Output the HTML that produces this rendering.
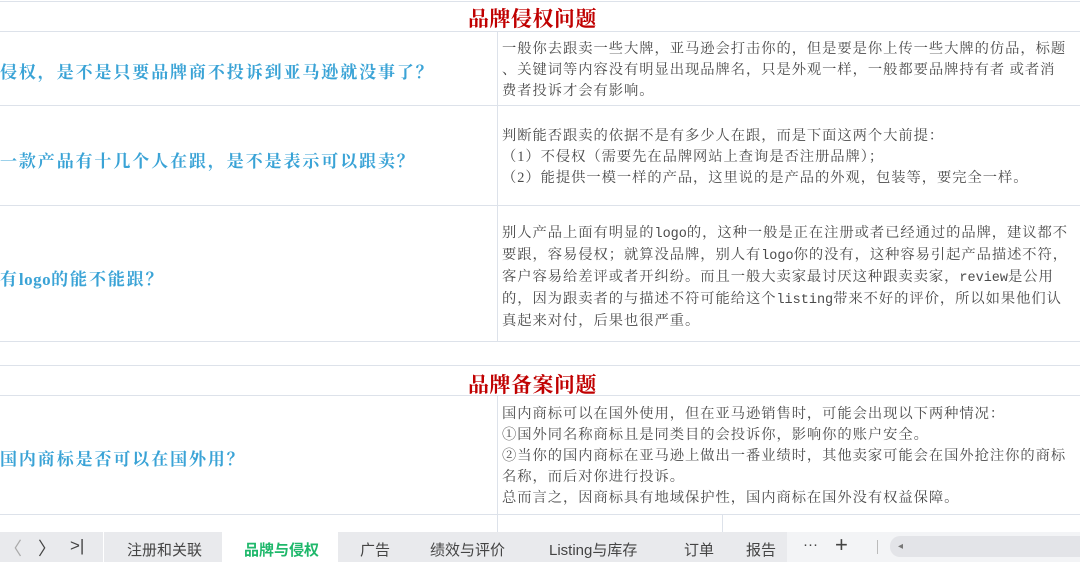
<!DOCTYPE html>
<html><head><meta charset="utf-8"><style>
*{margin:0;padding:0;box-sizing:border-box}
body{width:1080px;height:562px;overflow:hidden;background:#fff;position:relative;font-family:"Liberation Serif","Noto Serif CJK SC",serif}
.h{position:absolute;left:0;width:1080px;height:1px;background:#dde2ea}
.v{position:absolute;left:497px;width:1px;background:#dde2ea}
.t{position:absolute;color:#c00000;font-size:21px;font-weight:bold;left:468px;white-space:nowrap;letter-spacing:0.5px}
.q{position:absolute;left:0;color:#3aa3d6;font-size:17px;font-weight:bold;white-space:nowrap;letter-spacing:1.9px}
.a{position:absolute;left:502px;color:#4a4a4a;font-size:14.3px;line-height:21px;white-space:nowrap;letter-spacing:0.95px}
.a span{font-family:"Liberation Mono",monospace;font-size:13.5px;letter-spacing:0}
.bar{position:absolute;left:0;top:532px;width:1080px;height:30px;background:#e9eaed;font-family:"Liberation Sans","Noto Sans CJK SC",sans-serif;font-size:15px;color:#444}
.tab{position:absolute;top:7px;white-space:nowrap}
</style></head><body>
<div class="h" style="top:1px"></div>
<div class="h" style="top:31px"></div>
<div class="h" style="top:105px"></div>
<div class="h" style="top:205px"></div>
<div class="h" style="top:341px"></div>
<div class="h" style="top:365px"></div>
<div class="h" style="top:395px"></div>
<div class="h" style="top:514px"></div>
<div class="v" style="top:31px;height:310px"></div>
<div class="v" style="top:395px;height:137px"></div>
<div class="v" style="top:514px;height:18px;left:722px"></div>

<div class="t" style="top:3px">品牌侵权问题</div>
<div class="q" style="top:58px">侵权，是不是只要品牌商不投诉到亚马逊就没事了？</div>
<div class="a" style="top:39px">一般你去跟卖一些大牌，亚马逊会打击你的，但是要是你上传一些大牌的仿品，标题<br>、关键词等内容没有明显出现品牌名，只是外观一样，一般都要品牌持有者 或者消<br>费者投诉才会有影响。</div>

<div class="q" style="top:147px">一款产品有十几个人在跟，是不是表示可以跟卖？</div>
<div class="a" style="top:126px">判断能否跟卖的依据不是有多少人在跟，而是下面这两个大前提：<br>（1）不侵权（需要先在品牌网站上查询是否注册品牌）；<br>（2）能提供一模一样的产品，这里说的是产品的外观，包装等，要完全一样。</div>

<div class="q" style="top:265px">有<span style="font-family:'Liberation Serif';letter-spacing:0.5px">logo</span>的能不能跟？</div>
<div class="a" style="top:223px">别人产品上面有明显的<span>logo</span>的，这种一般是正在注册或者已经通过的品牌，建议都不<br>要跟，容易侵权；就算没品牌，别人有<span>logo</span>你的没有，这种容易引起产品描述不符，<br>客户容易给差评或者开纠纷。而且一般大卖家最讨厌这种跟卖卖家，<span>review</span>是公用<br>的，因为跟卖者的与描述不符可能给这个<span>listing</span>带来不好的评价，所以如果他们认<br>真起来对付，后果也很严重。</div>

<div class="t" style="top:369px">品牌备案问题</div>
<div class="q" style="top:445px">国内商标是否可以在国外用？</div>
<div class="a" style="top:404px">国内商标可以在国外使用，但在亚马逊销售时，可能会出现以下两种情况：<br>①国外同名称商标且是同类目的会投诉你，影响你的账户安全。<br>②当你的国内商标在亚马逊上做出一番业绩时，其他卖家可能会在国外抢注你的商标<br>名称，而后对你进行投诉。<br>总而言之，因商标具有地域保护性，国内商标在国外没有权益保障。</div>

<div class="bar">
<div class="tab" style="left:4px;color:#aaa;font-size:18px;top:3px">〈</div>
<div class="tab" style="left:38px;font-size:18px;top:3px">〉</div>
<div class="tab" style="left:70px;font-size:17px;top:4px">&gt;|</div>
<div style="position:absolute;left:103px;top:0;width:1px;height:30px;background:#fff"></div>
<div class="tab" style="left:127px">注册和关联</div>
<div style="position:absolute;left:222px;top:0;width:116px;height:30px;background:#fff"></div>
<div class="tab" style="left:244px;color:#1fb86b;font-weight:bold">品牌与侵权</div>
<div class="tab" style="left:360px">广告</div>
<div class="tab" style="left:430px">绩效与评价</div>
<div class="tab" style="left:549px">Listing与库存</div>
<div class="tab" style="left:684px">订单</div>
<div class="tab" style="left:746px">报告</div>
<div style="position:absolute;left:787px;top:0;width:293px;height:30px;background:#f3f4f6"></div>
<div class="tab" style="left:803px;top:4px">···</div>
<div class="tab" style="left:835px;font-size:22px;top:0">+</div>
<div style="position:absolute;left:877px;top:8px;width:1px;height:14px;background:#bbb"></div>
<div style="position:absolute;left:890px;top:4px;width:190px;height:21px;background:#e3e4e8;border-radius:10px 0 0 10px"></div>
<div class="tab" style="left:898px;font-size:10px;top:9px;color:#777">◂</div>
</div>
</body></html>
